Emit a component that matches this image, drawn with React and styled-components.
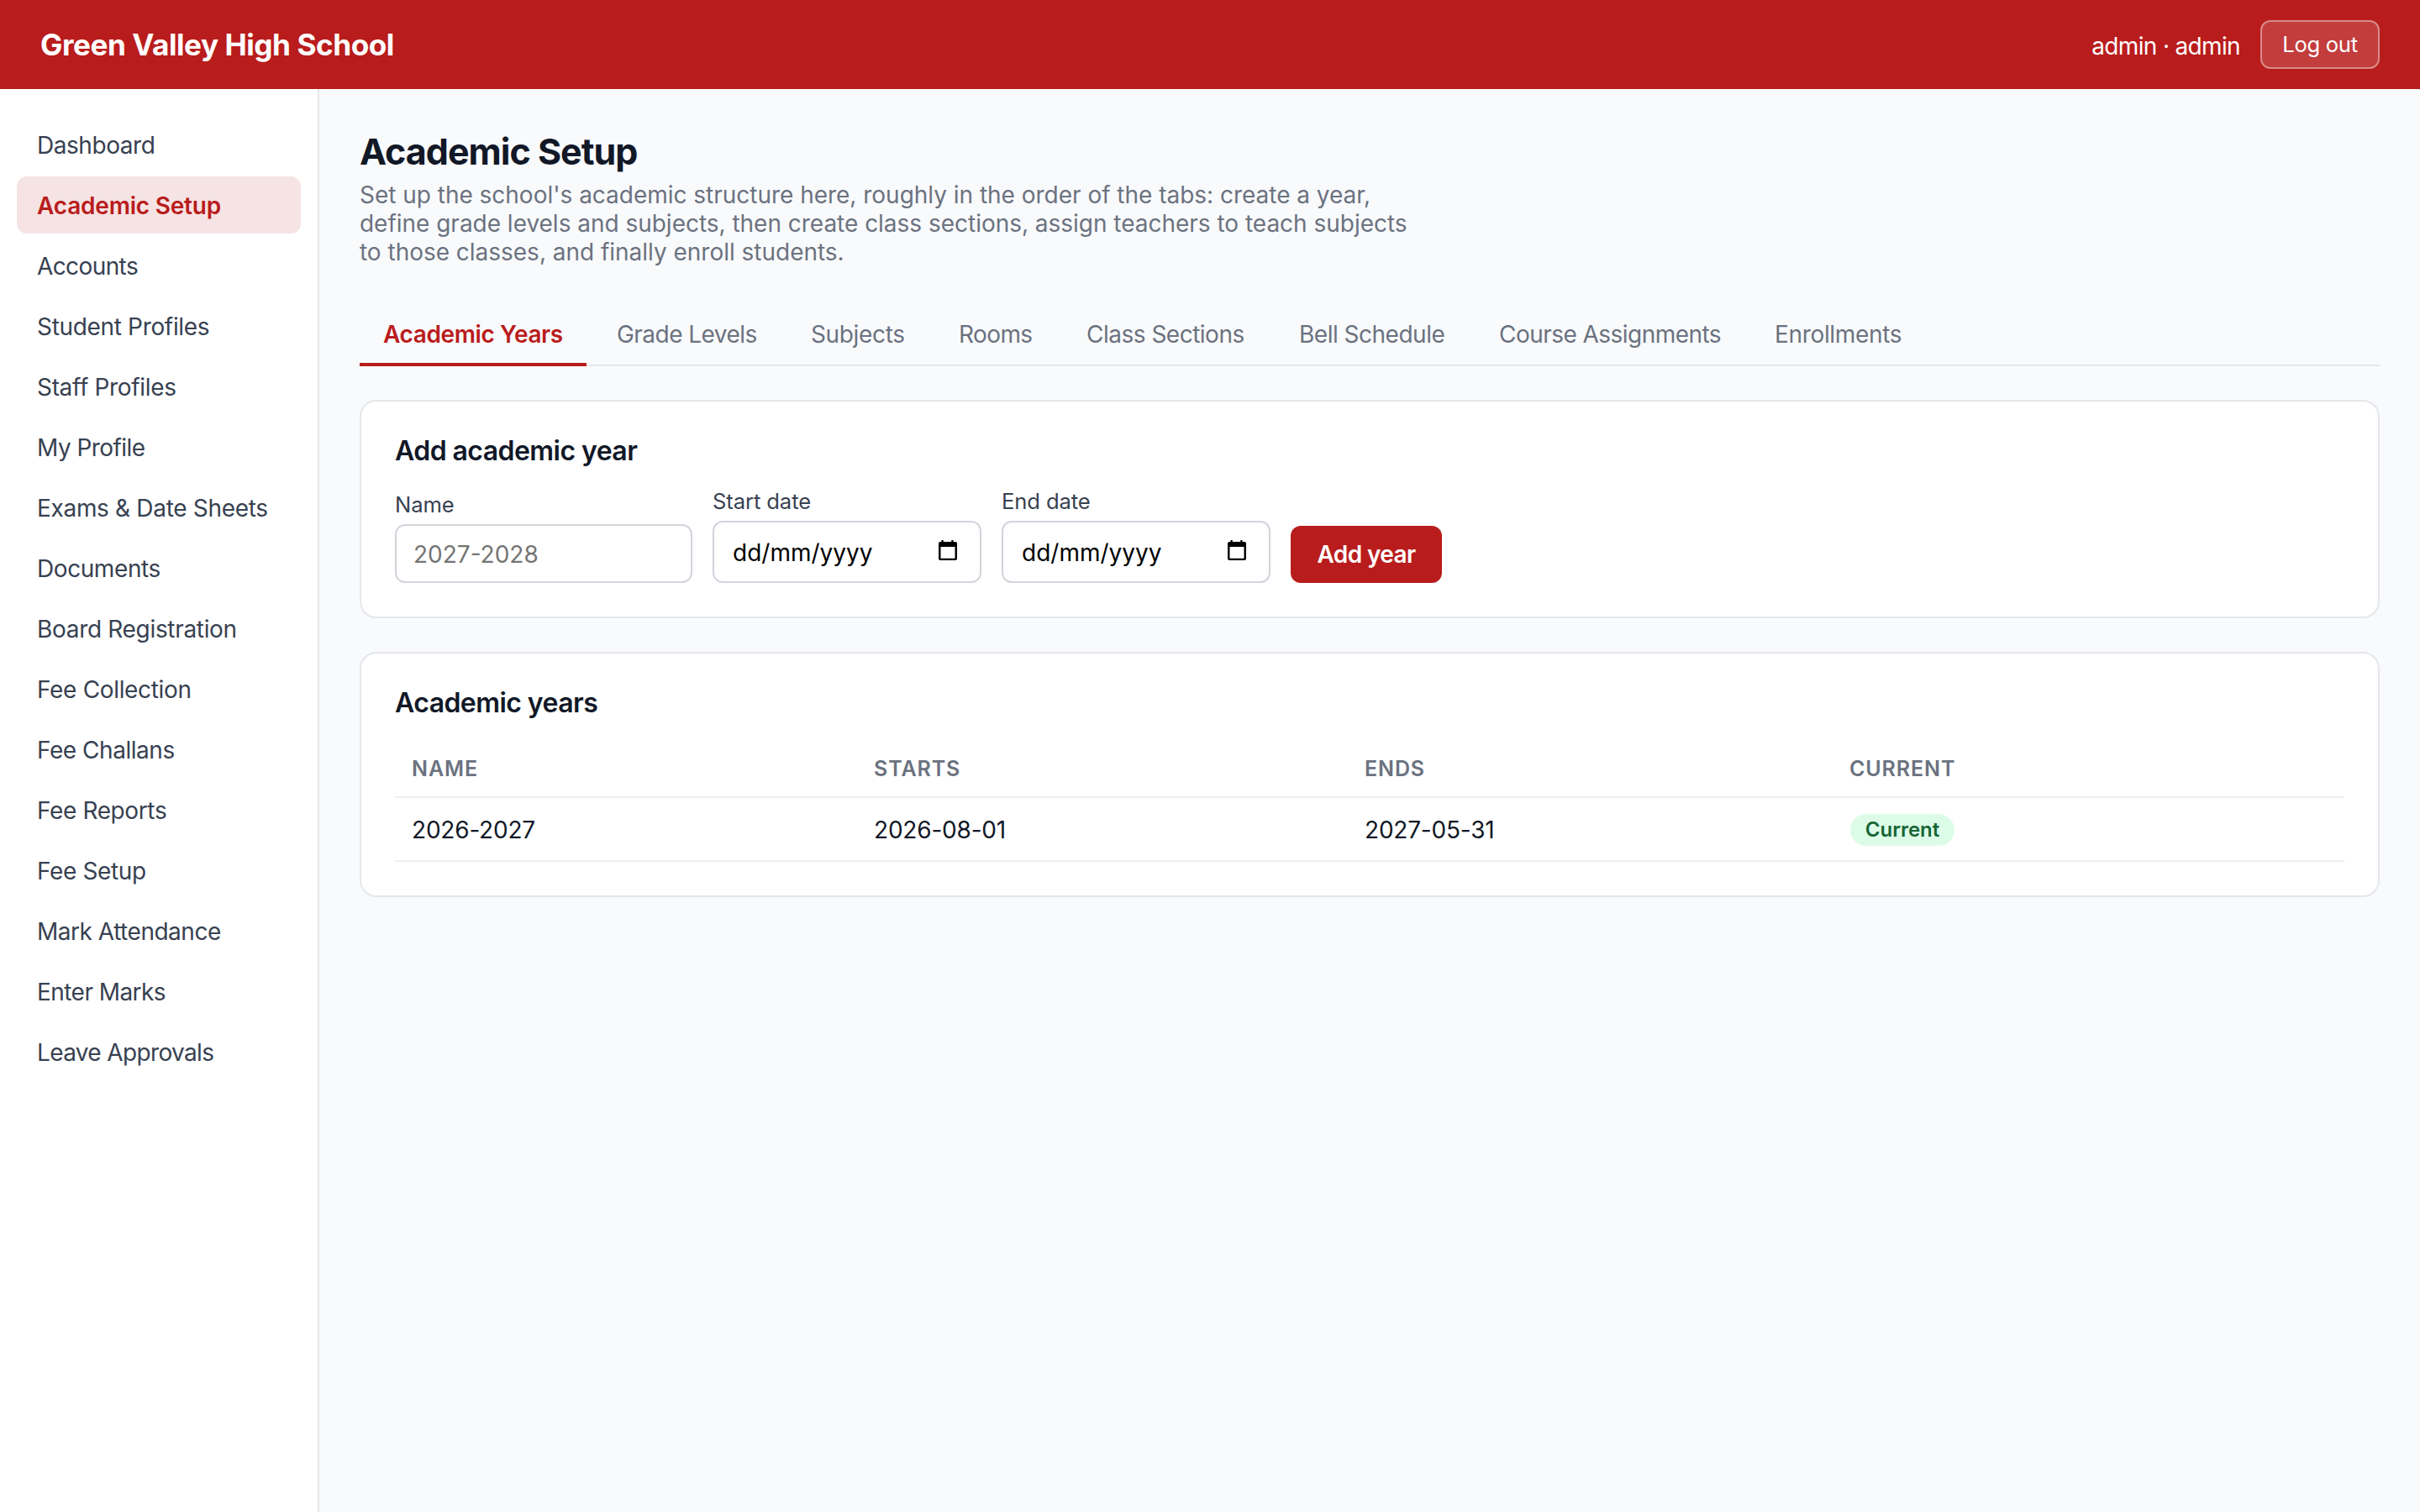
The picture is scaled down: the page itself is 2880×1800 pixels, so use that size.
import React from 'react'
import styled, { createGlobalStyle } from 'styled-components'

const links = [
  { label: 'Dashboard', track: -0.45 },
  { label: 'Academic Setup', track: -0.2, active: true },
  { label: 'Accounts', track: -0.6 },
  { label: 'Student Profiles', track: -0.33 },
  { label: 'Staff Profiles', track: -0.33 },
  { label: 'My Profile', track: -0.55 },
  { label: 'Exams & Date Sheets', track: -0.32 },
  { label: 'Documents', track: -0.42 },
  { label: 'Board Registration', track: -0.32 },
  { label: 'Fee Collection', track: -0.33 },
  { label: 'Fee Challans', track: -0.46 },
  { label: 'Fee Reports', track: -0.38 },
  { label: 'Fee Setup', track: -0.36 },
  { label: 'Mark Attendance', track: -0.48 },
  { label: 'Enter Marks', track: -0.55 },
  { label: 'Leave Approvals', track: -0.64 },
]

const tabs = [
  { label: 'Academic Years', width: 270, track: -0.38, active: true },
  { label: 'Grade Levels', width: 223, track: -0.53 },
  { label: 'Subjects', width: 168, track: -0.35 },
  { label: 'Rooms', width: 144, track: -0.6 },
  { label: 'Class Sections', width: 245, track: -0.5 },
  { label: 'Bell Schedule', width: 230, track: -0.5 },
  { label: 'Course Assignments', width: 320, track: -0.54 },
  { label: 'Enrollments', width: 208, track: -0.33 },
]

const years = [
  { name: '2026-2027', starts: '2026-08-01', ends: '2027-05-31', current: true },
]

function CalendarIcon() {
  return (
    <svg width="22" height="24" viewBox="0 0 22 24">
      <path fill="#000" fillRule="evenodd" d="M3.500 0h2.200v2h9.600V0h2.200v2H20a2 2 0 0 1 2 2v18a2 2 0 0 1-2 2H2a2 2 0 0 1-2-2V4a2 2 0 0 1 2-2h1.500zM2.500 8v13.700h17V8z" />
    </svg>
  )
}

function DateField({ label }) {
  return (
    <Field>
      <Label>{label}</Label>
      <DateBox>
        <span>dd/mm/yyyy</span>
        <CalendarIcon />
      </DateBox>
    </Field>
  )
}

function App() {
  return (
    <>
      <GlobalStyle />
      <Page>
        <Header>
          <Brand>Green Valley High School</Brand>
          <UserMenu>
            <UserName>admin · admin</UserName>
            <LogoutButton>Log out</LogoutButton>
          </UserMenu>
        </Header>
        <Body>
          <Sidebar>
            {links.map(link => (
              <NavLink key={link.label} $active={link.active} $track={link.track}>{link.label}</NavLink>
            ))}
          </Sidebar>
          <Main>
            <Title>Academic Setup</Title>
            <Intro>
              Set up the school's academic structure here, roughly in the order of the tabs: create a year,<br />
              define grade levels and subjects, then create class sections, assign teachers to teach subjects<br />
              to those classes, and finally enroll students.
            </Intro>
            <TabBar>
              {tabs.map(tab => (
                <Tab key={tab.label} $active={tab.active} $width={tab.width} $track={tab.track}>{tab.label}</Tab>
              ))}
            </TabBar>
            <Card $height={260}>
              <CardTitle>Add academic year</CardTitle>
              <Form>
                <Field>
                  <Label>Name</Label>
                  <NameInput placeholder="2027-2028" />
                </Field>
                <DateField label="Start date" />
                <DateField label="End date" />
                <AddButton>Add year</AddButton>
              </Form>
            </Card>
            <Card $height={292}>
              <CardTitle>Academic years</CardTitle>
              <HeadRow>
                <span>Name</span>
                <span>Starts</span>
                <span>Ends</span>
                <span>Current</span>
              </HeadRow>
              {years.map(year => (
                <Row key={year.name}>
                  <span>{year.name}</span>
                  <span>{year.starts}</span>
                  <span>{year.ends}</span>
                  {year.current && <Badge>Current</Badge>}
                </Row>
              ))}
            </Card>
          </Main>
        </Body>
      </Page>
    </>
  )
}

export default App

const GlobalStyle = createGlobalStyle`
  * {
    box-sizing: border-box;
  }
  body {
    margin: 0;
    background: #f9fafc;
    color: #111827;
    font-family: Inter, "Liberation Sans", sans-serif;
    font-size: 28px;
  }
  button, input {
    font-family: inherit;
  }
`

const Page = styled.div`
  height: 1800px;
  display: flex;
  flex-direction: column;
`

const Header = styled.header`
  height: 106px;
  padding: 0 48px;
  display: flex;
  align-items: center;
  justify-content: space-between;
  background: #b91c1c;
  color: #fff;
`

const Brand = styled.div`
  font-size: 35.2px;
  font-weight: 700;
  letter-spacing: -0.47px;
`

const UserMenu = styled.div`
  display: flex;
  align-items: center;
  gap: 24px;
`

const UserName = styled.span`
  padding-top: 3px;
  font-size: 28px;
  letter-spacing: -0.65px;
`

const LogoutButton = styled.button`
  width: 142px;
  height: 58px;
  padding: 0 0 1px;
  border: 2px solid rgba(255, 255, 255, 0.4);
  border-radius: 12px;
  background: rgba(255, 255, 255, 0.15);
  color: #fff;
  font-size: 25.6px;
  letter-spacing: -0.3px;
`

const Body = styled.div`
  flex: 1;
  display: flex;
`

const Sidebar = styled.nav`
  width: 380px;
  padding: 32px 20px;
  display: flex;
  flex-direction: column;
  gap: 4px;
  background: #fff;
  border-right: 2px solid #e5e7eb;
`

const NavLink = styled.a`
  height: 68px;
  padding: 0 24px;
  border-radius: 12px;
  line-height: 70px;
  white-space: nowrap;
  font-size: 28px;
  letter-spacing: ${props => props.$track}px;
  font-weight: ${props => props.$active ? 600 : 400};
  color: ${props => props.$active ? '#b91c1c' : '#374151'};
  background: ${props => props.$active ? 'rgba(185, 28, 28, 0.12)' : 'transparent'};
`

const Main = styled.main`
  flex: 1;
  padding: 48px;
`

const Title = styled.h1`
  margin: 0;
  height: 61px;
  line-height: 52px;
  font-size: 43px;
  font-weight: 700;
  letter-spacing: -1px;
`

const Intro = styled.p`
  margin: 0;
  height: 102px;
  line-height: 34px;
  font-size: 28px;
  letter-spacing: -0.02px;
  white-space: nowrap;
  color: #6b7280;
`

const TabBar = styled.div`
  margin-top: 41px;
  height: 78px;
  display: flex;
  gap: 8px;
  border-bottom: 2px solid #e5e7eb;
`

const Tab = styled.div`
  width: ${props => props.$width}px;
  height: 78px;
  padding: 0 28px;
  line-height: 80px;
  white-space: nowrap;
  font-size: 28px;
  letter-spacing: ${props => props.$track}px;
  font-weight: ${props => props.$active ? 600 : 400};
  color: ${props => props.$active ? '#b91c1c' : '#6b7280'};
  border-bottom: ${props => props.$active ? '4px solid #b91c1c' : '4px solid transparent'};
`

const Card = styled.section`
  height: ${props => props.$height}px;
  margin-top: 40px;
  padding: 38px 40px;
  background: #fff;
  border: 2px solid #e5e7eb;
  border-radius: 20px;
`

const CardTitle = styled.h2`
  margin: 0;
  height: 40px;
  line-height: 42px;
  font-size: 32px;
  font-weight: 600;
  letter-spacing: -0.56px;
`

const Form = styled.div`
  height: 138px;
  display: flex;
  align-items: flex-end;
  gap: 24px;
`

const Field = styled.div`
  display: flex;
  flex-direction: column;
`

const Label = styled.label`
  height: 40px;
  line-height: 34px;
  font-size: 25.6px;
  letter-spacing: -0.1px;
  color: #374151;
`

const NameInput = styled.input`
  width: 354px;
  height: 70px;
  padding: 1px 20px 0;
  border: 2px solid #d1d5db;
  border-radius: 12px;
  background: #fff;
  font-size: 28px;
  &::placeholder {
    color: #757575;
  }
`

const DateBox = styled.div`
  width: 320px;
  height: 74px;
  padding: 1px 27px 0 22px;
  display: flex;
  align-items: center;
  justify-content: space-between;
  border: 2px solid #d1d5db;
  border-radius: 12px;
  background: #fff;
  color: #000;
  font-size: 28px;
  svg {
    margin-bottom: 5px;
  }
`

const AddButton = styled.button`
  width: 180px;
  height: 68px;
  padding: 0;
  border: none;
  border-radius: 12px;
  background: #b91c1c;
  color: #fff;
  font-size: 28px;
  font-weight: 600;
  letter-spacing: -0.6px;
`

const Row = styled.div`
  height: 76px;
  padding: 2px 0 0 20px;
  display: grid;
  grid-template-columns: 550px 584px 577px 1fr;
  align-items: center;
  border-bottom: 2px solid #f0f0f0;
  font-size: 28px;
  letter-spacing: -0.2px;
`

const HeadRow = styled(Row)`
  height: 94px;
  padding-top: 26px;
  font-size: 25px;
  font-weight: 600;
  text-transform: uppercase;
  letter-spacing: 0.9px;
  color: #6b7280;
`

const Badge = styled.span`
  justify-self: start;
  width: 124px;
  height: 38px;
  margin-left: 1px;
  border-radius: 19px;
  line-height: 38px;
  text-align: center;
  background: #dcfce7;
  color: #166534;
  font-size: 24px;
  font-weight: 600;
  letter-spacing: 0;
`
